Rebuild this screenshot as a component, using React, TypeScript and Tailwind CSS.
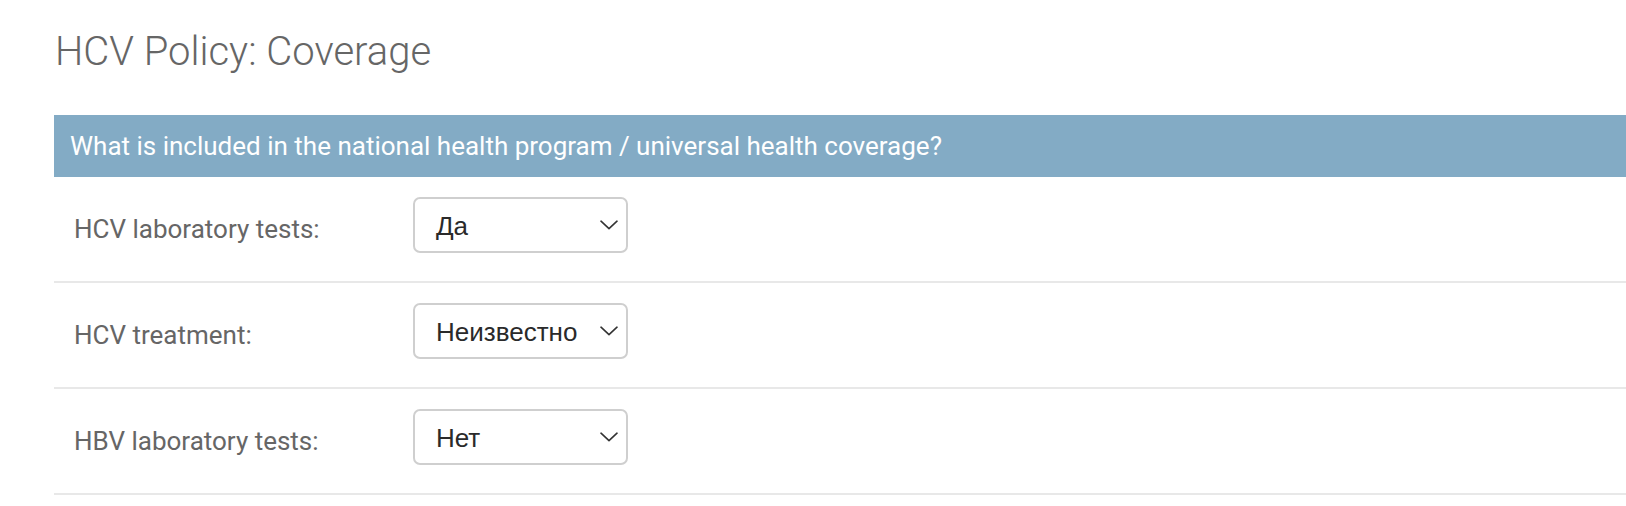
import React from 'react';

const rows = [
  { label: 'HCV laboratory tests:', value: 'Да' },
  { label: 'HCV treatment:', value: 'Неизвестно' },
  { label: 'HBV laboratory tests:', value: 'Нет' },
];

const Chevron: React.FC = () => (
  <svg width="18" height="10" viewBox="0 0 18 10" fill="none" className="shrink-0">
    <path d="M1 1.2 L9 8.6 L17 1.2" stroke="#333" strokeWidth="1.6" strokeLinecap="round" strokeLinejoin="round" />
  </svg>
);

const App: React.FC = () => {
  return (
    <div className="min-h-screen bg-white font-['Roboto',sans-serif]">
      <div className="pl-[54px] pt-[32px]">
        <h1 className="text-[40px] leading-[40px] font-light text-[#666] pl-[1px]">HCV Policy: Coverage</h1>

        <div className="mt-[43px]">
          <h2 className="h-[62px] flex items-center bg-[#83abc5] pl-[16px] text-[26px] text-white">
            What is included in the national health program / universal health coverage?
          </h2>

          {rows.map((row, index) => (
            <div key={index} className="flex items-center pt-[20px] pb-[28px] border-b-2 border-[#e8e8e8]">
              <label className="w-[359px] pl-[20px] pt-[8px] text-[26px] text-[#666]">{row.label}</label>
              <div className="flex items-center justify-between w-[215px] h-[56px] border-2 border-[#cfcfcf] rounded-[7px] pl-[21px] pr-[8px] bg-white">
                <span className="pt-[3px] font-['Liberation_Sans',Arial,sans-serif] text-[26px] text-[#2a2a2a]">{row.value}</span>
                <Chevron />
              </div>
            </div>
          ))}
        </div>
      </div>
    </div>
  );
};

export default App;
